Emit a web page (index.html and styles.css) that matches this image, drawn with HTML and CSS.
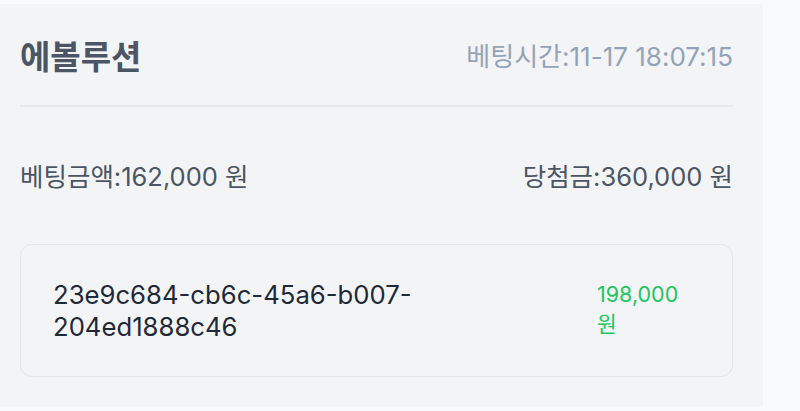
FILE: index.html
```html
<!DOCTYPE html>
<html lang="ko">
<head>
    <meta charset="UTF-8">
    <meta name="viewport" content="width=device-width, initial-scale=1.0">
    <title>베팅 내역</title>
    <link rel="stylesheet" href="styles.css">
</head>
<body>
    <div class="panel">
        <div class="header">
            <h2 class="game">에볼루션</h2>
            <span class="time">베팅시간:11-17 18:07:15</span>
        </div>
        <div class="amounts">
            <span>베팅금액:162,000 원</span>
            <span>당첨금:360,000 원</span>
        </div>
        <div class="card">
            <div class="bet-id">23e9c684-<wbr>cb6c-<wbr>45a6-<wbr>b007-<wbr>204ed1888c46</div>
            <div class="win">198,000 원</div>
        </div>
    </div>
</body>
</html>
```

FILE: styles.css
```css
body {
    font-family: Inter, "Noto Sans CJK KR", sans-serif;
    margin: 0;
    padding: 0;
    background-color: #f9fafb;
    color: #4b5563;
}
.panel {
    width: 713px;
    height: 403px;
    margin-top: 4px;
    padding: 0 30px 0 20px;
    background: #f3f4f6;
}
.header {
    height: 101px;
    display: flex;
    justify-content: space-between;
    align-items: center;
    border-bottom: 2px solid #e5e7eb;
}
.game {
    margin: 0;
    font-size: 33px;
    font-weight: 600;
    color: #4b5563;
}
.time {
    font-size: 26px;
    color: #94a3b8;
}
.amounts {
    display: flex;
    justify-content: space-between;
    padding-top: 50px;
    line-height: 40px;
    font-size: 25.5px;
}
.card {
    display: flex;
    align-items: flex-start;
    margin-top: 47px;
    padding: 34px 45px 33px 32px;
    border: 1px solid #e2e5ea;
    border-radius: 12px;
}
.bet-id {
    flex: 1;
    padding-right: 100px;
    font-size: 25.7px;
    line-height: 32px;
    color: #1f2937;
}
.win {
    width: 90px;
    font-size: 21.5px;
    line-height: 30px;
    color: #22c55e;
}
```
